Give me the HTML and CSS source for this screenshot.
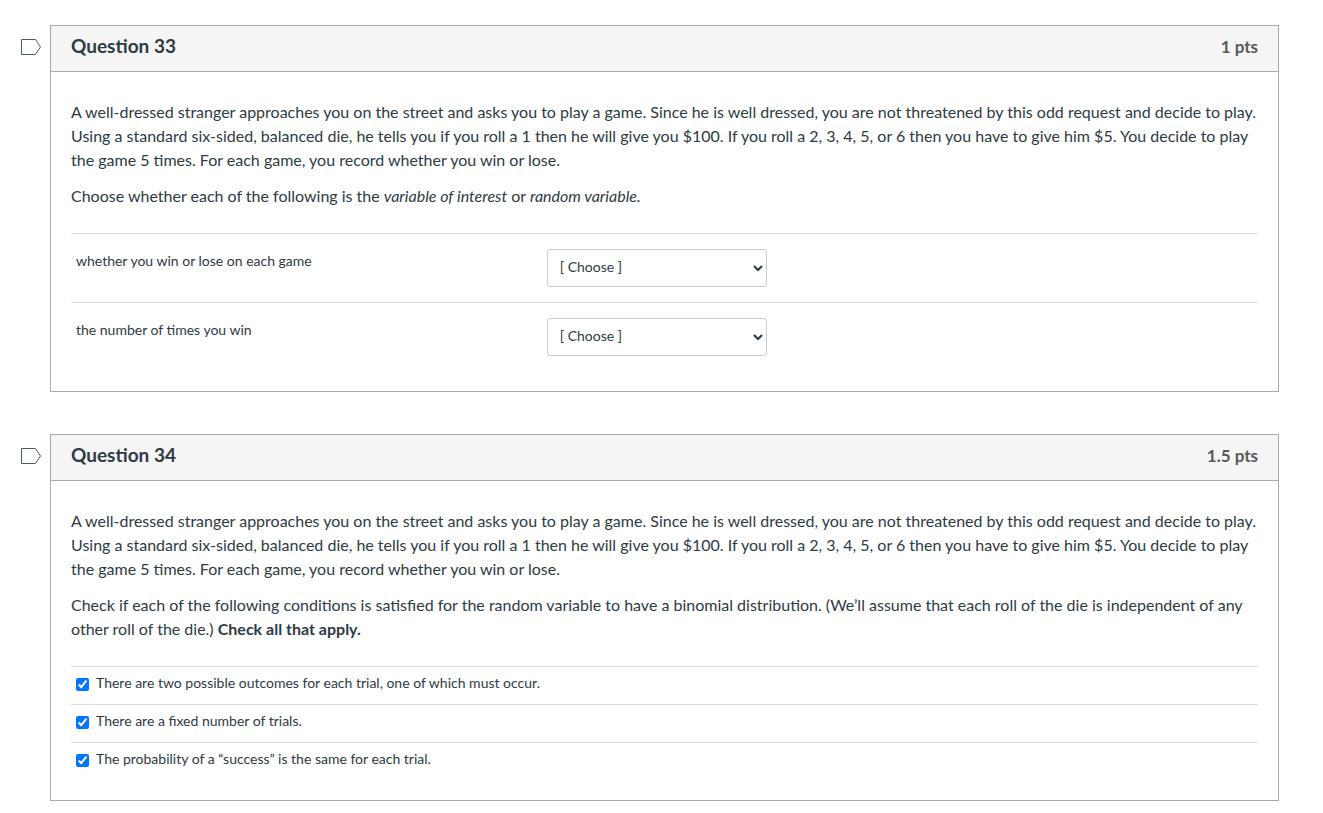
FILE: index.html
```html
<!DOCTYPE html>
<html lang="en">
<head>
  <meta charset="utf-8">
  <title>Quiz</title>
  <link rel="stylesheet" href="styles.css">
</head>
<body>

  <form id="quizForm">
    <div class="question-row">
      <button type="button" class="flag" aria-label="Flag question 33">
        <svg width="22" height="18" viewBox="0 0 22 18"><path d="M1.5 1.5H15.5L20.5 9L15.5 16.5H1.5Z" fill="#fff" stroke="#43606f"/></svg>
      </button>
      <section class="question">
        <header class="question-header">
          <h2>Question 33</h2>
          <span class="points">1 pts</span>
        </header>
        <div class="question-body">
          <p>A well-dressed stranger approaches you on the street and asks you to play a game. Since he is well dressed, you are not threatened by this odd request and decide to play. Using a standard six-sided, balanced die, he tells you if you roll a 1 then he will give you $100. If you roll a 2, 3, 4, 5, or 6 then you have to give him $5. You decide to play the game 5 times. For each game, you record whether you win or lose.</p>
          <p>Choose whether each of the following is the <em>variable of interest</em> or <em>random variable.</em></p>
          <div class="answers">
            <div class="match">
              <label for="match1">whether you win or lose on each game</label>
              <select id="match1">
                <option>[ Choose ]</option>
                <option>variable of interest</option>
                <option>random variable</option>
              </select>
            </div>
            <div class="match">
              <label for="match2">the number of times you win</label>
              <select id="match2">
                <option>[ Choose ]</option>
                <option>variable of interest</option>
                <option>random variable</option>
              </select>
            </div>
          </div>
        </div>
      </section>
    </div>

    <div class="question-row">
      <button type="button" class="flag" aria-label="Flag question 34">
        <svg width="22" height="18" viewBox="0 0 22 18"><path d="M1.5 1.5H15.5L20.5 9L15.5 16.5H1.5Z" fill="#fff" stroke="#43606f"/></svg>
      </button>
      <section class="question">
        <header class="question-header">
          <h2>Question 34</h2>
          <span class="points">1.5 pts</span>
        </header>
        <div class="question-body">
          <p>A well-dressed stranger approaches you on the street and asks you to play a game. Since he is well dressed, you are not threatened by this odd request and decide to play. Using a standard six-sided, balanced die, he tells you if you roll a 1 then he will give you $100. If you roll a 2, 3, 4, 5, or 6 then you have to give him $5. You decide to play the game 5 times. For each game, you record whether you win or lose.</p>
          <p>Check if each of the following conditions is satisfied for the random variable to have a binomial distribution. (We’ll assume that each roll of the die is independent of any other roll of the die.) <strong>Check all that apply.</strong></p>
          <div class="answers">
            <div class="choice">
              <input type="checkbox" id="choice1" checked>
              <label for="choice1">There are two possible outcomes for each trial, one of which must occur.</label>
            </div>
            <div class="choice">
              <input type="checkbox" id="choice2" checked>
              <label for="choice2">There are a fixed number of trials.</label>
            </div>
            <div class="choice">
              <input type="checkbox" id="choice3" checked>
              <label for="choice3">The probability of a “success” is the same for each trial.</label>
            </div>
          </div>
        </div>
      </section>
    </div>
  </form>

</body>
</html>
```
FILE: styles.css
```css
body {
  margin: 0;
  padding: 25px 44px 12px 20px;
  background: #fff;
  color: #2d3b45;
  font-family: Lato, "Liberation Sans", sans-serif;
  font-size: 16px;
  line-height: 24px;
}
.question-row {
  display: flex;
  align-items: flex-start;
  margin-bottom: 42px;
}
.question-row:last-child {
  margin-bottom: 0;
}
.flag {
  display: block;
  width: 30px;
  padding: 13px 0 0;
  border: none;
  background: none;
  text-align: left;
  cursor: pointer;
}
.flag svg {
  display: block;
}
.question {
  flex: 1;
  border: 1px solid #aaa;
}
.question-header {
  display: flex;
  justify-content: space-between;
  padding: 8px 20px 13px;
  border-bottom: 1px solid #aaa;
  background: #f5f5f5;
}
h2 {
  margin: 0;
  font-size: 19px;
  line-height: 24px;
}
.points {
  padding-top: 2px;
  line-height: 22px;
  color: #595959;
  font-size: 17px;
  font-weight: bold;
}
.question-body {
  padding: 28px 20px 20px;
}
p {
  margin: 0 0 12px;
}
.answers {
  margin-top: 25px;
  font-size: 14px;
  line-height: 20px;
}
.match {
  display: flex;
  align-items: flex-start;
  padding: 15px 5px;
  border-top: 1px solid #ddd;
}
.match label {
  flex: 0 0 40%;
  padding-top: 2px;
}
select {
  width: 220px;
  height: 38px;
  padding: 6px 9px 10px 8px;
  border: 1px solid #c7cdd1;
  border-radius: 3px;
  background: #fff;
  color: #2d3b45;
  font-family: inherit;
  font-size: 14px;
}
.choice {
  display: flex;
  align-items: flex-start;
  padding: 6px 5px 11px;
  border-top: 1px solid #ddd;
}
.choice input {
  width: 13px;
  height: 13px;
  margin: 5px 7px 0 0;
}
```
